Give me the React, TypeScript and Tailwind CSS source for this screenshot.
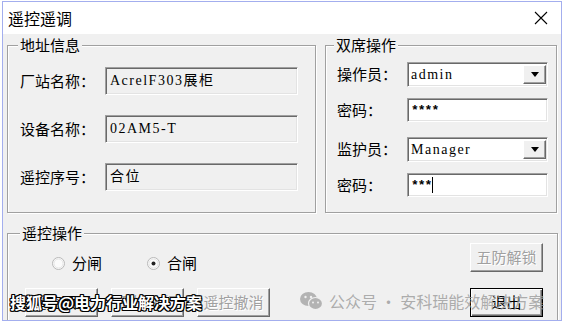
import React from "react";

const sunken =
  "border border-t-[#a0a0a0] border-l-[#a0a0a0] border-r-white border-b-white shadow-[inset_1px_1px_0_#696969,inset_-1px_-1px_0_#e3e3e3]";
const raised =
  "border border-t-white border-l-white border-r-[#696969] border-b-[#696969] shadow-[inset_-1px_-1px_0_#a0a0a0]";
const group = "border border-[#a0a0a0] shadow-[inset_1px_1px_0_#fff,1px_1px_0_#fff]";
const legend = "bg-[#f0f0f0] px-[2px] text-[15px] leading-[20px]";
const serif =
  "font-['Liberation_Serif','Noto_Sans_CJK_SC',serif] text-[14px] leading-none tracking-[1.5px]";
const disabledText = "text-[#a0a0a0] [text-shadow:1px_1px_0_#fff]";

const InfoRow: React.FC<{ label: string; value: string }> = ({ label, value }) => (
  <div className="flex items-center h-[28px]">
    <span className="w-[85px] text-[15px]">{label}</span>
    <div className={`w-[193px] h-full bg-[#f0f0f0] flex items-center pl-[4px] ${sunken} ${serif}`}>
      {value}
    </div>
  </div>
);

const Combo: React.FC<{ label: string; value: string; className?: string }> = ({
  label,
  value,
  className = "",
}) => (
  <div className={`flex items-center ${className}`}>
    <span className="w-[70px] text-[15px]">{label}</span>
    <div className={`w-[141px] h-[25px] bg-white flex items-center pl-[3px] pr-[1px] py-[2px] ${sunken}`}>
      <span className={`flex-1 ${serif}`}>{value}</span>
      <div className={`w-[23px] h-full bg-[#f0f0f0] flex items-center justify-center ${raised}`}>
        <svg width="8" height="5" viewBox="0 0 8 5">
          <path d="M0 0h8L4 5z" fill="#000" />
        </svg>
      </div>
    </div>
  </div>
);

const Password: React.FC<{ value: string; caret?: boolean; className?: string }> = ({
  value,
  caret,
  className = "",
}) => (
  <div className={`flex items-center ${className}`}>
    <span className="w-[70px] text-[15px]">密码：</span>
    <div className={`w-[141px] h-[24px] bg-white flex items-center pl-[3px] ${sunken}`}>
      <span className="font-['Liberation_Mono',monospace] text-[13px] leading-none tracking-[-1px] font-bold">
        {value}
      </span>
      {caret && <span className="w-[1px] h-[16px] bg-black ml-[1px]" />}
    </div>
  </div>
);

const Radio: React.FC<{ label: string; checked?: boolean; className?: string }> = ({
  label,
  checked,
  className = "",
}) => (
  <div className={`flex items-center gap-[7px] ${className}`}>
    <svg width="13" height="13" viewBox="0 0 13 13">
      <circle cx="6.5" cy="6.5" r="6" fill="#fbfbfb" stroke="#b8b8b8" />
      <circle cx="6.5" cy="6.5" r="4.5" fill="none" stroke="#e6e6e6" />
      {checked && <circle cx="6.5" cy="6.5" r="2" fill="#222" />}
    </svg>
    <span className="text-[15px]">{label}</span>
  </div>
);

const Btn: React.FC<{ children: React.ReactNode; disabled?: boolean; isDefault?: boolean }> = ({
  children,
  disabled,
  isDefault,
}) => (
  <div
    className={`w-[73px] h-[29px] bg-[#f0f0f0] flex items-center justify-center text-[15px] ${
      isDefault
        ? "border border-black shadow-[inset_1px_1px_0_#fff,inset_-1px_-1px_0_#696969,inset_-2px_-2px_0_#a0a0a0]"
        : raised
    } ${disabled ? disabledText : "text-black"}`}
  >
    {children}
  </div>
);

const WeChat: React.FC = () => (
  <svg width="23" height="18" viewBox="0 0 23 18">
    <ellipse cx="8.5" cy="7" rx="8.5" ry="7" fill="#b3b3b3" />
    <ellipse cx="15.5" cy="11.5" rx="7" ry="6" fill="#b3b3b3" stroke="#f0f0f0" strokeWidth="1.2" />
    <circle cx="5.5" cy="5" r="1.2" fill="#f0f0f0" />
    <circle cx="11" cy="5" r="1.2" fill="#f0f0f0" />
    <circle cx="13" cy="10.5" r="1" fill="#f0f0f0" />
    <circle cx="18" cy="10.5" r="1" fill="#f0f0f0" />
  </svg>
);

export default function App() {
  return (
    <div className="relative w-[563px] h-[325px] bg-white overflow-hidden font-['Noto_Sans_CJK_SC',sans-serif] text-black">
      <div className="ml-[2px] mt-[1px] w-[560px] h-[320px] border border-[#a3aeee] flex flex-col">
        {/* title bar */}
        <div className="h-[32px] bg-white flex items-center justify-between pl-[5px] pr-[13px] shrink-0">
          <span className="text-[16px] leading-none">遥控遥调</span>
          <svg width="14" height="14" viewBox="0 0 14 14">
            <path d="M1 1L13 13M13 1L1 13" stroke="#000" strokeWidth="1.1" />
          </svg>
        </div>

        <div className="flex-1 bg-[#f0f0f0] overflow-hidden px-[4px] pt-[1px]">
          <div className="flex">
            <fieldset className={`${group} w-[309px] h-[178px]`}>
              <legend className={`ml-[10px] ${legend}`}>地址信息</legend>
              <div className="flex flex-col gap-[20px] mt-[12px] pl-[12px]">
                <InfoRow label="厂站名称：" value="AcrelF303展柜" />
                <InfoRow label="设备名称：" value="02AM5-T" />
                <InfoRow label="遥控序号：" value="合位" />
              </div>
            </fieldset>

            <fieldset className={`${group} ml-[9px] w-[232px] h-[178px]`}>
              <legend className={`ml-[8px] ${legend}`}>双席操作</legend>
              <div className="flex flex-col pl-[11px]">
                <Combo label="操作员：" value="admin" className="mt-[7px]" />
                <Password value="****" className="mt-[11px]" />
                <Combo label="监护员：" value="Manager" className="mt-[15px]" />
                <Password value="***" caret className="mt-[11px]" />
              </div>
            </fieldset>
          </div>

          <fieldset className={`${group} mt-[10px] w-[551px] h-[120px]`}>
            <legend className={`ml-[12px] ${legend}`}>遥控操作</legend>
            <div className="flex justify-between pr-[14px]">
              <div className="pl-[17px] pt-[8px]">
                <div className="flex items-center h-[24px] pl-[27px]">
                  <Radio label="分闸" className="w-[95px]" />
                  <Radio label="合闸" checked />
                </div>
                <div className="flex gap-[13px] mt-[13px]">
                  <Btn>遥控预置</Btn>
                  <Btn disabled>遥控执行</Btn>
                  <Btn disabled>遥控撤消</Btn>
                </div>
              </div>
              <div className="flex flex-col gap-[16px]">
                <Btn disabled>五防解锁</Btn>
                <Btn isDefault>退出</Btn>
              </div>
            </div>
          </fieldset>
        </div>
      </div>

      {/* watermarks */}
      <div className="absolute left-[10px] top-[291px] text-[16px] font-bold text-white leading-[22px] [text-shadow:1px_1px_0_#000,-1px_-1px_0_#000,1px_-1px_0_#000,-1px_1px_0_#000,0_1px_0_#000,0_-1px_0_#000,1px_0_0_#000,-1px_0_0_#000]">
        搜狐号@电力行业解决方案
      </div>
      <div className="absolute left-[300px] top-[290px] flex items-center gap-[6px] text-[16px] leading-[22px] text-[#9a9a9a]/80">
        <WeChat />
        <span>公众号 · 安科瑞能效解决方案</span>
      </div>
    </div>
  );
}
